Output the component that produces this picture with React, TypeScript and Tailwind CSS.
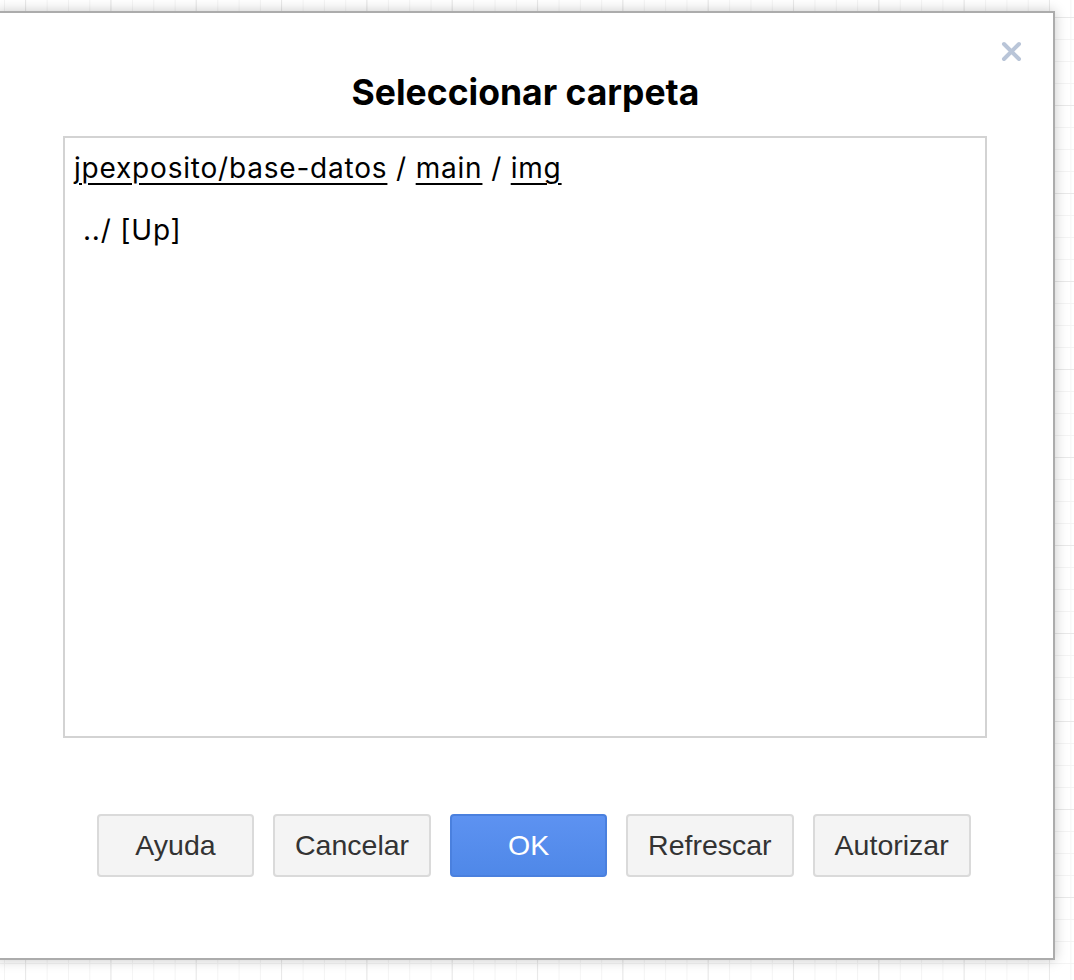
import React from 'react';

const buttons = ['Ayuda', 'Cancelar', 'OK', 'Refrescar', 'Autorizar'];

function CloseIcon() {
  return (
    <svg width="21" height="21" viewBox="0 0 21 21" fill="none">
      <path d="M3 3L18 18M18 3L3 18" stroke="#b9c5d8" strokeWidth="4" strokeLinecap="round" />
    </svg>
  );
}

export default function App() {
  return (
    <div className="min-h-screen pt-[11px] bg-white bg-[linear-gradient(to_right,#e9e9e9_1px,transparent_1px),linear-gradient(to_bottom,#e9e9e9_1px,transparent_1px),linear-gradient(to_right,#f4f4f4_1px,transparent_1px),linear-gradient(to_bottom,#f4f4f4_1px,transparent_1px)] bg-[size:85.33px_88px,85.33px_88px,21.33px_22px,21.33px_22px] bg-[position:25px_17px,25px_17px,4px_17px,4px_17px]">
      <div className="relative ml-[-4px] w-[1059px] h-[949px] bg-white border-2 border-[#acacac] shadow-[0_0_12px_rgba(0,0,0,0.22)] flex flex-col">
        <button className="absolute top-[28px] right-[31px] cursor-pointer">
          <CloseIcon />
        </button>

        <h1 className="mt-[60px] text-center text-[35.5px] leading-[40px] font-bold text-black font-['Inter',sans-serif]">
          Seleccionar carpeta
        </h1>

        <div className="mt-[23px] ml-[65px] w-[924px] h-[602px] border-2 border-[#d3d3d3] px-[9px] pt-[11px] font-['Inter',sans-serif] text-[28px] tracking-[0.8px] leading-[38px] text-black">
          <div>
            <span className="underline underline-offset-[5px] decoration-[2px]">jpexposito/base-datos</span>
            {' / '}
            <span className="underline underline-offset-[5px] decoration-[2px]">main</span>
            {' / '}
            <span className="underline underline-offset-[5px] decoration-[2px]">img</span>
          </div>
          <div className="mt-[24px] pl-[9px]">../ [Up]</div>
        </div>

        <div className="mt-[76px] flex gap-[19px] pl-[99px] font-['Liberation_Sans',Arial,sans-serif] text-[28.5px]">
          {buttons.map((label) =>
            label === 'OK' ? (
              <button
                key={label}
                className="h-[63px] min-w-[157px] px-[20px] rounded-[4px] border-2 border-[#4a80de] bg-[linear-gradient(to_bottom,#5d92f1,#4f88e8)] text-white"
              >
                {label}
              </button>
            ) : (
              <button
                key={label}
                className="h-[63px] min-w-[157px] px-[20px] rounded-[4px] border-2 border-[#dadada] bg-[#f4f4f4] text-[#333]"
              >
                {label}
              </button>
            )
          )}
        </div>
      </div>
    </div>
  );
}
